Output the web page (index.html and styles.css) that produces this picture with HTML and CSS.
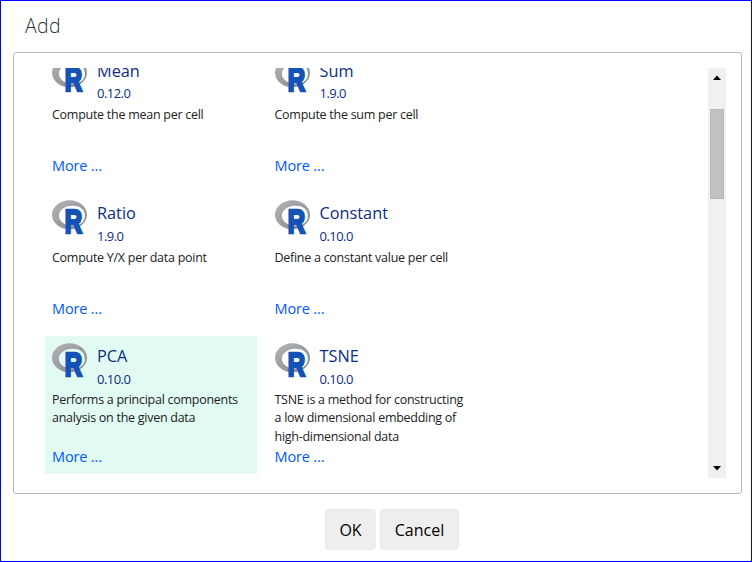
FILE: index.html
```
<!DOCTYPE html>
<html lang="en">
<head>
<meta charset="utf-8">
<title>Add</title>
<link rel="stylesheet" href="styles.css">
</head>
<body>
<svg class="defs" width="0" height="0" aria-hidden="true">
  <defs>
    <linearGradient id="ring" x1="0" y1="0" x2="1" y2="1">
      <stop offset="0" stop-color="#b2b4b8"/>
      <stop offset="1" stop-color="#85868a"/>
    </linearGradient>
    <symbol id="r-logo" viewBox="0 0 34 34">
      <path fill="url(#ring)" fill-rule="evenodd" d="M17 .2C7.600.2 0 6.500 0 14.300S7.600 28.400 17 28.400 34 22.100 34 14.300 26.400.2 17 .2ZM19.600 5.500C26.700 5.500 32 8.500 32 15.200S26.700 24.900 19.600 24.900 6.700 20.500 6.700 15.200 12.500 5.500 19.600 5.500Z"/>
      <text class="logo-letter" transform="translate(12.300 31.900) scale(.72 1)" x="0" y="0">R</text>
    </symbol>
  </defs>
</svg>
<main class="dialog">
  <h1 class="title">Add</h1>
  <section class="panel">
    <div class="viewport">
      <div class="cards">
        <article class="card">
          <header class="head"><svg class="logo"><use href="#r-logo"/></svg><div><h2 class="name">Mean</h2><p class="version">0.12.0</p></div></header>
          <p class="desc">Compute the mean per cell</p>
          <a class="more">More ...</a>
        </article>
        <article class="card">
          <header class="head"><svg class="logo"><use href="#r-logo"/></svg><div><h2 class="name">Sum</h2><p class="version">1.9.0</p></div></header>
          <p class="desc">Compute the sum per cell</p>
          <a class="more">More ...</a>
        </article>
        <article class="card">
          <header class="head"><svg class="logo"><use href="#r-logo"/></svg><div><h2 class="name">Ratio</h2><p class="version">1.9.0</p></div></header>
          <p class="desc">Compute Y/X per data point</p>
          <a class="more">More ...</a>
        </article>
        <article class="card">
          <header class="head"><svg class="logo"><use href="#r-logo"/></svg><div><h2 class="name">Constant</h2><p class="version">0.10.0</p></div></header>
          <p class="desc">Define a constant value per cell</p>
          <a class="more">More ...</a>
        </article>
        <article class="card selected">
          <header class="head"><svg class="logo"><use href="#r-logo"/></svg><div><h2 class="name">PCA</h2><p class="version">0.10.0</p></div></header>
          <p class="desc tall">Performs a principal components<br>analysis on the given data</p>
          <a class="more">More ...</a>
        </article>
        <article class="card">
          <header class="head"><svg class="logo"><use href="#r-logo"/></svg><div><h2 class="name">TSNE</h2><p class="version">0.10.0</p></div></header>
          <p class="desc tall">TSNE is a method for constructing<br>a low dimensional embedding of<br>high-dimensional data</p>
          <a class="more">More ...</a>
        </article>
      </div>
      <div class="scrollbar">
        <svg class="arrow" viewBox="0 0 18 18"><path d="M9 7.500 13 12H5Z"/></svg>
        <div class="thumb"></div>
        <svg class="arrow down" viewBox="0 0 18 18"><path d="M5 6h8l-4 4.500Z"/></svg>
      </div>
    </div>
  </section>
  <footer class="actions">
    <button class="btn ok">OK</button>
    <button class="btn cancel">Cancel</button>
  </footer>
</main>
</body>
</html>
```
FILE: styles.css
```
* { box-sizing: border-box; margin: 0; padding: 0; }
body { background: #fff; font-family: "Open Sans", "Noto Sans", sans-serif; }
.defs { display: block; height: 0; }
.dialog {
  width: 752px;
  height: 562px;
  border: 1px solid #0000f0;
  padding: 0 9px 0 12px;
  overflow: hidden;
}
.title {
  height: 51px;
  padding: 11px 0 0 12px;
  font-size: 19.5px;
  line-height: 28px;
  font-weight: 300;
  color: #333;
  letter-spacing: .35px;
}
.panel {
  width: 729px;
  height: 442px;
  border: 1px solid #b3bac6;
  border-radius: 3px;
  padding: 15px 15px 15px 31px;
}
.viewport {
  display: flex;
  justify-content: space-between;
  height: 410px;
  overflow: hidden;
}
.cards {
  display: grid;
  grid-template-columns: 212px 212px;
  grid-auto-rows: 138px;
  gap: 4.75px 10.5px;
  margin-top: -17.5px;
}
.card { display: flex; flex-direction: column; padding: 7px; }
.selected { background: #e1faf2; }
.head { display: flex; gap: 10px; height: 48.7px; }
.logo { width: 35px; height: 35px; flex: none; }
.logo-letter {
  font: bold 32.5px "Liberation Sans", sans-serif;
  fill: #1452b5;
  stroke: #1452b5;
  stroke-width: 2.6px;
}
.name {
  margin-top: 1px;
  font-size: 16.3px;
  line-height: 24px;
  font-weight: 400;
  letter-spacing: 0;
  color: #0c2d83;
}
.version { padding-top: .5px; font-size: 13px; line-height: 20px; letter-spacing: -.55px; color: #0c2d83; }
.desc {
  height: 50px;
  font-size: 12.5px;
  line-height: 18.5px;
  letter-spacing: -.27px;
  color: #222;
  white-space: nowrap;
}
.desc.tall { height: 57.6px; }
.more { font-size: 14.5px; line-height: 20px; letter-spacing: -.15px; color: #0057ff; }
.scrollbar {
  display: flex;
  flex-direction: column;
  align-items: center;
  width: 18px;
  background: #f0f0f0;
}
.arrow { width: 18px; height: 18px; flex: none; fill: #000; }
.thumb { width: 14px; height: 90px; margin-top: 23px; background: #c1c1c1; border: 1px solid #b9b9b9; }
.down { margin-top: auto; }
.actions { display: flex; gap: 4px; padding: 15px 0 0 312px; }
.btn {
  height: 41px;
  border: 1px solid #eaeaea;
  border-radius: 4px;
  background: #eee;
  font-family: inherit;
  font-size: 16px;
  line-height: 24px;
  letter-spacing: 0;
  color: #000;
}
.ok { width: 51px; }
.cancel { width: 79px; }
```
